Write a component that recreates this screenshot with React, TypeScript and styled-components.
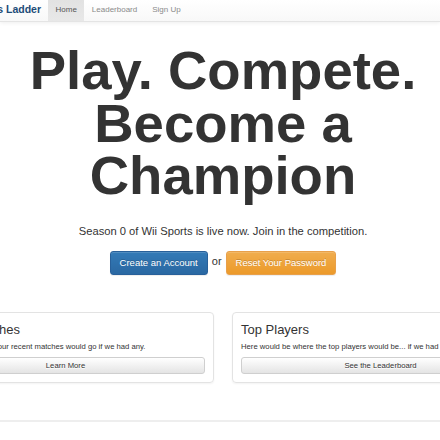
import React from "react";
import styled, { createGlobalStyle } from "styled-components";

const Global = createGlobalStyle`
  html, body { margin: 0; padding: 0; background: #fff; }
  body {
    width: 440px;
    overflow: hidden;
    font-family: "Liberation Sans", Arial, Helvetica, sans-serif;
    color: #333;
  }
  * { box-sizing: border-box; }
`;

const Navbar = styled.nav`
  display: flex;
  align-items: stretch;
  height: 22px;
  background: linear-gradient(to bottom, #ffffff 0%, #f8f8f8 100%);
  border-bottom: 1px solid #e4e4e4;
  box-shadow: 0 1px 4px rgba(0, 0, 0, 0.07);
`;

const Brand = styled.a`
  display: flex;
  justify-content: flex-end;
  align-items: center;
  width: 41px;
  white-space: nowrap;
  font-size: 10.5px;
  font-weight: bold;
  color: #1d4c78;
  padding-bottom: 3px;
  margin-right: 7px;
`;

const NavLink = styled.a<{ $active?: boolean }>`
  display: flex;
  align-items: center;
  padding: 0 7.5px 3px;
  font-size: 8px;
  color: ${(p) => (p.$active ? "#555" : "#8a8a8a")};
  background: ${(p) =>
    p.$active ? "linear-gradient(to bottom, #e2e2e2 0%, #e8e8e8 100%)" : "transparent"};
`;

const Main = styled.main`
  width: 100%;
  padding-left: 6px;
  display: flex;
  flex-direction: column;
  align-items: center;
`;

const Headline = styled.h1`
  margin: 23px 0 0;
  font-size: 54.5px;
  line-height: 52.5px;
  font-weight: bold;
  text-align: center;
  color: #333;
  white-space: nowrap;
`;

const Lead = styled.p`
  margin: 19px 0 0;
  font-size: 11.2px;
  line-height: 18px;
  white-space: nowrap;
`;

const Actions = styled.div`
  display: flex;
  align-items: center;
  gap: 4px;
  margin-top: 11px;
  font-size: 11px;
`;

const Or = styled.span`
  color: #333;
  padding-bottom: 4px;
`;

const Button = styled.a<{ $variant: "primary" | "warning" }>`
  display: flex;
  align-items: center;
  justify-content: center;
  height: 24px;
  padding: 0 9px;
  border-radius: 3px;
  font-size: 9.5px;
  color: #fff;
  white-space: nowrap;
  text-shadow: 0 -1px 0 rgba(0, 0, 0, 0.2);
  box-shadow: inset 0 1px 0 rgba(255, 255, 255, 0.15), 0 1px 1px rgba(0, 0, 0, 0.075);
  ${(p) =>
    p.$variant === "primary"
      ? `background: linear-gradient(to bottom, #337ab7 0%, #2a68a2 100%); border: 1px solid #28609a;`
      : `background: linear-gradient(to bottom, #f0ad4e 0%, #ec9a2a 100%); border: 1px solid #e8a04a;`}
`;

const Panels = styled.section`
  display: flex;
  gap: 18px;
  width: 612px;
  margin-top: 37px;
  flex-shrink: 0;
`;

const Panel = styled.div`
  flex: 1;
  display: flex;
  flex-direction: column;
  padding: 8px 8px 8px;
  border: 1px solid #e3e3e3;
  border-radius: 4px;
  box-shadow: 0 1px 2px rgba(0, 0, 0, 0.05);
  height: 71px;
`;

const PanelTitle = styled.h3`
  margin: 0;
  font-size: 13px;
  line-height: 17px;
  font-weight: normal;
  color: #333;
  white-space: nowrap;
`;

const PanelText = styled.p`
  margin: 3px 0 0;
  font-size: 7.7px;
  line-height: 12px;
  color: #333;
  white-space: nowrap;
`;

const BlockButton = styled.a`
  display: flex;
  align-items: center;
  justify-content: center;
  margin-top: 4px;
  height: 18px;
  border: 1px solid #cfcfcf;
  border-radius: 3px;
  background: linear-gradient(to bottom, #ffffff 0%, #e4e4e4 100%);
  font-size: 7.7px;
  color: #333;
  text-shadow: 0 1px 0 #fff;
  white-space: nowrap;
`;

const Footer = styled.footer`
  margin-top: 37px;
  border-top: 2px solid #eeeeee;
  height: 20px;
`;

export default function App() {
  return (
    <>
      <Global />
      <Navbar>
        <Brand>Wii Sports Ladder</Brand>
        <NavLink $active>Home</NavLink>
        <NavLink>Leaderboard</NavLink>
        <NavLink>Sign Up</NavLink>
      </Navbar>
      <Main>
        <Headline>
          Play. Compete.
          <br />
          Become a
          <br />
          Champion
        </Headline>
        <Lead>Season 0 of Wii Sports is live now. Join in the competition.</Lead>
        <Actions>
          <Button $variant="primary">Create an Account</Button>
          <Or>or</Or>
          <Button $variant="warning">Reset Your Password</Button>
        </Actions>
        <Panels>
          <Panel>
            <PanelTitle>Recent Matches</PanelTitle>
            <PanelText>Here is where all of your recent matches would go if we had any.</PanelText>
            <BlockButton>Learn More</BlockButton>
          </Panel>
          <Panel>
            <PanelTitle>Top Players</PanelTitle>
            <PanelText>Here would be where the top players would be... if we had any.</PanelText>
            <BlockButton>See the Leaderboard</BlockButton>
          </Panel>
        </Panels>
      </Main>
      <Footer />
    </>
  );
}
